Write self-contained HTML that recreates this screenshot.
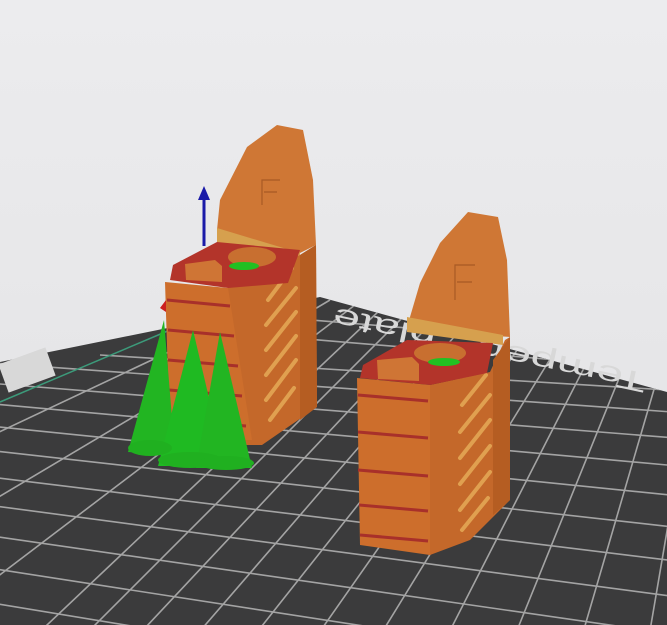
<!DOCTYPE html>
<html><head><style>html,body{margin:0;padding:0;width:667px;height:625px;overflow:hidden;background:#e8e8ea}svg{display:block}</style></head>
<body>
<svg width="667" height="625" viewBox="0 0 667 625" xmlns="http://www.w3.org/2000/svg">
<defs>
<linearGradient id="bg" x1="0" y1="0" x2="0" y2="1"><stop offset="0" stop-color="#ececee"/><stop offset="1" stop-color="#e2e2e4"/></linearGradient>
<clipPath id="bed"><polygon points="0,362 320,297 667,392 667,625 0,625"/></clipPath>
</defs>
<rect width="667" height="625" fill="url(#bg)"/>
<polygon points="0,362 320,297 667,392 667,625 0,625" fill="#3b3b3c"/>
<g clip-path="url(#bed)" stroke="#a4a4a4" stroke-width="1.6" fill="none">
<line x1="-50" y1="380" x2="700" y2="440"/>
<line x1="-50" y1="400" x2="700" y2="468"/>
<line x1="-50" y1="422" x2="700" y2="498"/>
<line x1="-50" y1="446" x2="700" y2="530"/>
<line x1="-50" y1="472" x2="700" y2="564"/>
<line x1="-50" y1="500" x2="700" y2="600"/>
<line x1="-50" y1="530" x2="700" y2="638"/>
<line x1="-50" y1="562" x2="700" y2="678"/>
<line x1="-50" y1="596" x2="700" y2="720"/>
<line x1="-50" y1="360" x2="700" y2="414"/>
<line x1="100" y1="355" x2="700" y2="392"/>
<line x1="200" y1="330" x2="700" y2="372"/>
<line x1="250" y1="315" x2="700" y2="352"/>
<line x1="300" y1="290" x2="-60" y2="460"/>
<line x1="330" y1="300" x2="-40" y2="520"/>
<line x1="355" y1="305" x2="-20" y2="590"/>
<line x1="380" y1="310" x2="10" y2="660"/>
<line x1="405" y1="315" x2="60" y2="660"/>
<line x1="432" y1="322" x2="115" y2="660"/>
<line x1="460" y1="330" x2="175" y2="660"/>
<line x1="490" y1="338" x2="235" y2="660"/>
<line x1="520" y1="346" x2="300" y2="660"/>
<line x1="552" y1="356" x2="365" y2="660"/>
<line x1="585" y1="366" x2="435" y2="660"/>
<line x1="620" y1="376" x2="505" y2="660"/>
<line x1="655" y1="386" x2="575" y2="660"/>
<line x1="690" y1="396" x2="645" y2="660"/>
<line x1="725" y1="406" x2="715" y2="660"/>
</g>
<line x1="0" y1="402" x2="170" y2="330" stroke="#3c9a7a" stroke-width="1.5"/>
<rect x="2" y="355" width="50" height="30" fill="#d8d8d8" transform="rotate(-20 27 370)"/>
<text x="490" y="348" text-anchor="middle" font-family="Liberation Sans, sans-serif" font-size="28" fill="#d8d8d8" textLength="320" lengthAdjust="spacingAndGlyphs" transform="rotate(192 490 348)" dominant-baseline="middle">Temper2_plate</text>

<!-- LEFT OBJECT -->
<polygon points="220,200 247,147 277,125 303,130 313,180 316,245 300,253 217,230" fill="#cf7735"/>
<polygon points="217,228 300,253 300,262 217,246" fill="#d6a04e"/>
<path d="M262 205 L262 180 L280 180 M264 192 L277 192" stroke="#a85a25" stroke-width="1.2" fill="none"/>
<polygon points="228,287 300,255 316,245 317,407 262,445 228,445" fill="#c4682a"/>
<polygon points="300,255 316,245 317,407 300,420" fill="#b55d22"/>
<g stroke="#e0a050" stroke-width="4" stroke-linecap="round">
<line x1="268" y1="300" x2="292" y2="268"/><line x1="266" y1="325" x2="296" y2="288"/><line x1="266" y1="350" x2="296" y2="312"/><line x1="266" y1="375" x2="296" y2="336"/><line x1="266" y1="400" x2="296" y2="360"/><line x1="270" y1="420" x2="294" y2="388"/></g>
<polygon points="173,265 217,242 300,250 288,283 228,288 170,280" fill="#b3342a"/>
<ellipse cx="252" cy="257" rx="24" ry="10" fill="#c86f30"/>
<ellipse cx="244" cy="266" rx="15" ry="4" fill="#22c022"/>
<polygon points="185,264 215,260 222,266 222,282 186,280" fill="#cf7535"/>
<polygon points="165,282 228,288 252,440 170,440" fill="#cd6e2c"/>
<g stroke="#a8302a" stroke-width="3"><line x1="167" y1="300" x2="230" y2="306"/><line x1="168" y1="330" x2="234" y2="336"/><line x1="168" y1="360" x2="238" y2="366"/><line x1="169" y1="390" x2="242" y2="396"/><line x1="170" y1="420" x2="246" y2="426"/></g>
<polygon points="164,320 175,455 128,452" fill="#22b522"/>
<polygon points="193,330 225,466 158,466" fill="#1fba22"/>
<polygon points="220,332 252,468 196,468" fill="#22b522"/>
<ellipse cx="150" cy="448" rx="22" ry="8" fill="#20b020"/>
<ellipse cx="190" cy="460" rx="32" ry="8" fill="#20b020"/>
<ellipse cx="226" cy="463" rx="28" ry="7" fill="#20b020"/>
<polygon points="160,308 166,300 166,312" fill="#cc2020"/>
<line x1="204" y1="246" x2="204" y2="198" stroke="#1a1aa8" stroke-width="3"/>
<polygon points="198,200 204,186 210,200" fill="#1a1aa8"/>

<!-- RIGHT OBJECT -->
<polygon points="410,317 420,283 440,243 468,212 498,217 507,260 510,337 407,330" fill="#cf7735"/>
<polygon points="407,317 503,335 503,345 407,332" fill="#d6a04e"/>
<path d="M455 300 L455 265 L475 265 M457 282 L472 282" stroke="#a85a25" stroke-width="1.2" fill="none"/>
<polygon points="430,385 490,372 505,340 510,337 510,500 470,540 430,555" fill="#c4682a"/>
<polygon points="493,360 510,337 510,500 493,515" fill="#b55d22"/>
<g stroke="#e0a050" stroke-width="4" stroke-linecap="round">
<line x1="462" y1="405" x2="486" y2="375"/><line x1="460" y1="432" x2="490" y2="395"/><line x1="460" y1="458" x2="490" y2="420"/><line x1="460" y1="484" x2="490" y2="446"/><line x1="460" y1="510" x2="490" y2="472"/><line x1="462" y1="530" x2="488" y2="498"/></g>
<polygon points="363,365 407,340 493,343 487,373 430,385 360,378" fill="#b3342a"/>
<ellipse cx="440" cy="353" rx="26" ry="10" fill="#c86f30"/>
<ellipse cx="444" cy="362" rx="16" ry="4" fill="#22c022"/>
<polygon points="377,360 412,357 419,364 419,381 378,379" fill="#cf7535"/>
<polygon points="357,378 430,385 430,555 360,545" fill="#cd6e2c"/>
<g stroke="#a8302a" stroke-width="3"><line x1="358" y1="395" x2="428" y2="401"/><line x1="358" y1="432" x2="428" y2="438"/><line x1="358" y1="470" x2="428" y2="476"/><line x1="359" y1="505" x2="428" y2="511"/><line x1="360" y1="535" x2="428" y2="541"/></g>
</svg>
</body></html>
